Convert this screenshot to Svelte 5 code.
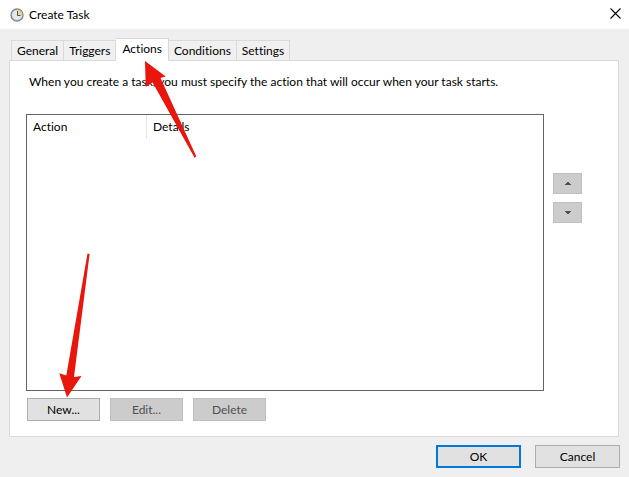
<script>
  const tabs = ['General', 'Triggers', 'Actions', 'Conditions', 'Settings'];
  let active = $state('Actions');
</script>

<main class="window">
  <header class="titlebar">
    <svg class="clock" width="14" height="14" viewBox="0 0 14 14" aria-hidden="true">
      <circle cx="7" cy="7" r="6" fill="#dfe9ef" stroke="#858583" stroke-width="1.4" />
      <path d="M7 7V1.6A5.400 5.400 0 0 1 12.400 7z" fill="#f5d48c" />
      <circle cx="7" cy="7" r="4.800" fill="none" stroke="#a8b6c0" stroke-width=".6" stroke-dasharray="1 1.6" />
      <path d="M7.500 3v4.500h3" fill="none" stroke="#3f5268" stroke-width="1" />
    </svg>
    <h1>Create Task</h1>
    <button class="close" aria-label="Close">
      <svg width="11" height="11" viewBox="0 0 11 11" aria-hidden="true">
        <path d="M.5 .5l10 10M10.500 .5l-10 10" stroke="#000" stroke-width="1.1" />
      </svg>
    </button>
  </header>

  <div class="body">
    <div class="tabs" role="tablist">
      {#each tabs as tab}
        <button role="tab" class="tab" class:active={tab === active} aria-selected={tab === active} onclick={() => (active = tab)}>{tab}</button>
      {/each}
    </div>

    <section class="panel" role="tabpanel" aria-label={active}>
      <p>When you create a task, you must specify the action that will occur when your task starts.</p>
      <div class="row">
        <div class="list">
          <table>
            <thead>
              <tr><th class="first" scope="col">Action</th><th scope="col">Details</th></tr>
            </thead>
          </table>
        </div>
        <div class="order">
          <button disabled aria-label="Move up">
            <svg width="6" height="3" viewBox="0 0 6 3" aria-hidden="true"><path d="M2 0h2v1h1v1h1v1H0V2h1V1h1z" fill="#505050" /></svg>
          </button>
          <button disabled aria-label="Move down">
            <svg width="6" height="3" viewBox="0 0 6 3" aria-hidden="true"><path d="M0 0h6v1H5v1H4v1H2V2H1V1H0z" fill="#505050" /></svg>
          </button>
        </div>
      </div>
      <div class="actions">
        <button>New...</button>
        <button disabled>Edit...</button>
        <button disabled>Delete</button>
      </div>
    </section>

    <footer>
      <button class="default">OK</button>
      <button>Cancel</button>
    </footer>
  </div>

  <svg class="arrows" width="200" height="400" viewBox="0 0 200 400" aria-hidden="true">
    <path d="M145 61L165.700 76.600L160.500 78L196.300 156.500L194.600 157.700L152.600 82.500L145.700 87z" />
    <path d="M67 397.500L59.300 373.300L66.300 375.600L87.500 253.500L89.600 254L74 377L81.500 376z" />
  </svg>
</main>

<style>
  :global(body) {
    margin: 0;
  }
  .window {
    position: relative;
    display: flex;
    flex-direction: column;
    min-height: 100vh;
    box-sizing: border-box;
    background: #efefef;
    color: #000;
    font: 12px/16px Lato, 'Open Sans', sans-serif;
    font-variant-ligatures: none;
  }
  .titlebar {
    display: flex;
    align-items: center;
    height: 29px;
    padding: 0 8px 0 10px;
    background: #fff;
  }
  h1 {
    flex: 1;
    margin: 0 0 0 5px;
    font-size: 12px;
    font-weight: 400;
  }
  button {
    box-sizing: border-box;
    height: 23px;
    padding: 0;
    border: 1px solid #adadad;
    background: #e1e1e1;
    color: #000;
    font: inherit;
  }
  button:disabled {
    border-color: #bfbfbf;
    background: #ccc;
    color: #505050;
  }
  .close {
    display: flex;
    height: auto;
    margin-bottom: 3px;
    border: 0;
    background: none;
  }
  .body {
    flex: 1;
    display: flex;
    flex-direction: column;
    padding: 9px;
  }
  .tabs {
    display: flex;
    align-items: flex-end;
    margin-bottom: -1px;
    padding-left: 2px;
  }
  .tab {
    height: 21px;
    padding: 0 5px;
    border: 1px solid #d9d9d9;
    border-left-width: 0;
    background: #f0f0f0;
  }
  .tab:first-child {
    border-left-width: 1px;
  }
  .tab.active {
    height: 23px;
    padding: 0 6px 2px;
    border-bottom-color: #fff;
    background: #fff;
    z-index: 1;
  }
  .panel {
    flex: 1;
    display: flex;
    flex-direction: column;
    margin-right: 1px;
    padding: 13px 36px 15px 16px;
    border: 1px solid #d9d9d9;
    background: #fff;
  }
  p {
    margin: 0 0 24px 3px;
  }
  .row {
    flex: 1;
    display: flex;
    gap: 9px;
  }
  .list {
    flex: 1;
    min-height: 120px;
    border: 1px solid #646464;
  }
  table {
    width: 100%;
    border-collapse: collapse;
    table-layout: fixed;
  }
  th {
    height: 24px;
    padding: 0 6px;
    font-weight: 400;
    text-align: left;
  }
  .first {
    width: 107px;
    border-right: 1px solid #e5e5e5;
  }
  .order {
    display: flex;
    flex-direction: column;
    gap: 8px;
    padding-top: 59px;
  }
  .order button {
    display: flex;
    align-items: center;
    justify-content: center;
    width: 29px;
    height: 21px;
  }
  .actions {
    display: flex;
    gap: 10px;
    margin: 7px 0 0 1px;
  }
  .actions button {
    width: 73px;
  }
  footer {
    display: flex;
    justify-content: flex-end;
    gap: 14px;
    padding-top: 8px;
  }
  footer button {
    width: 85px;
  }
  .default {
    border: 2px solid #0078d7;
  }
  .arrows {
    position: absolute;
    left: 0;
    top: 0;
    z-index: 2;
    fill: #e8160c;
    pointer-events: none;
  }
</style>
